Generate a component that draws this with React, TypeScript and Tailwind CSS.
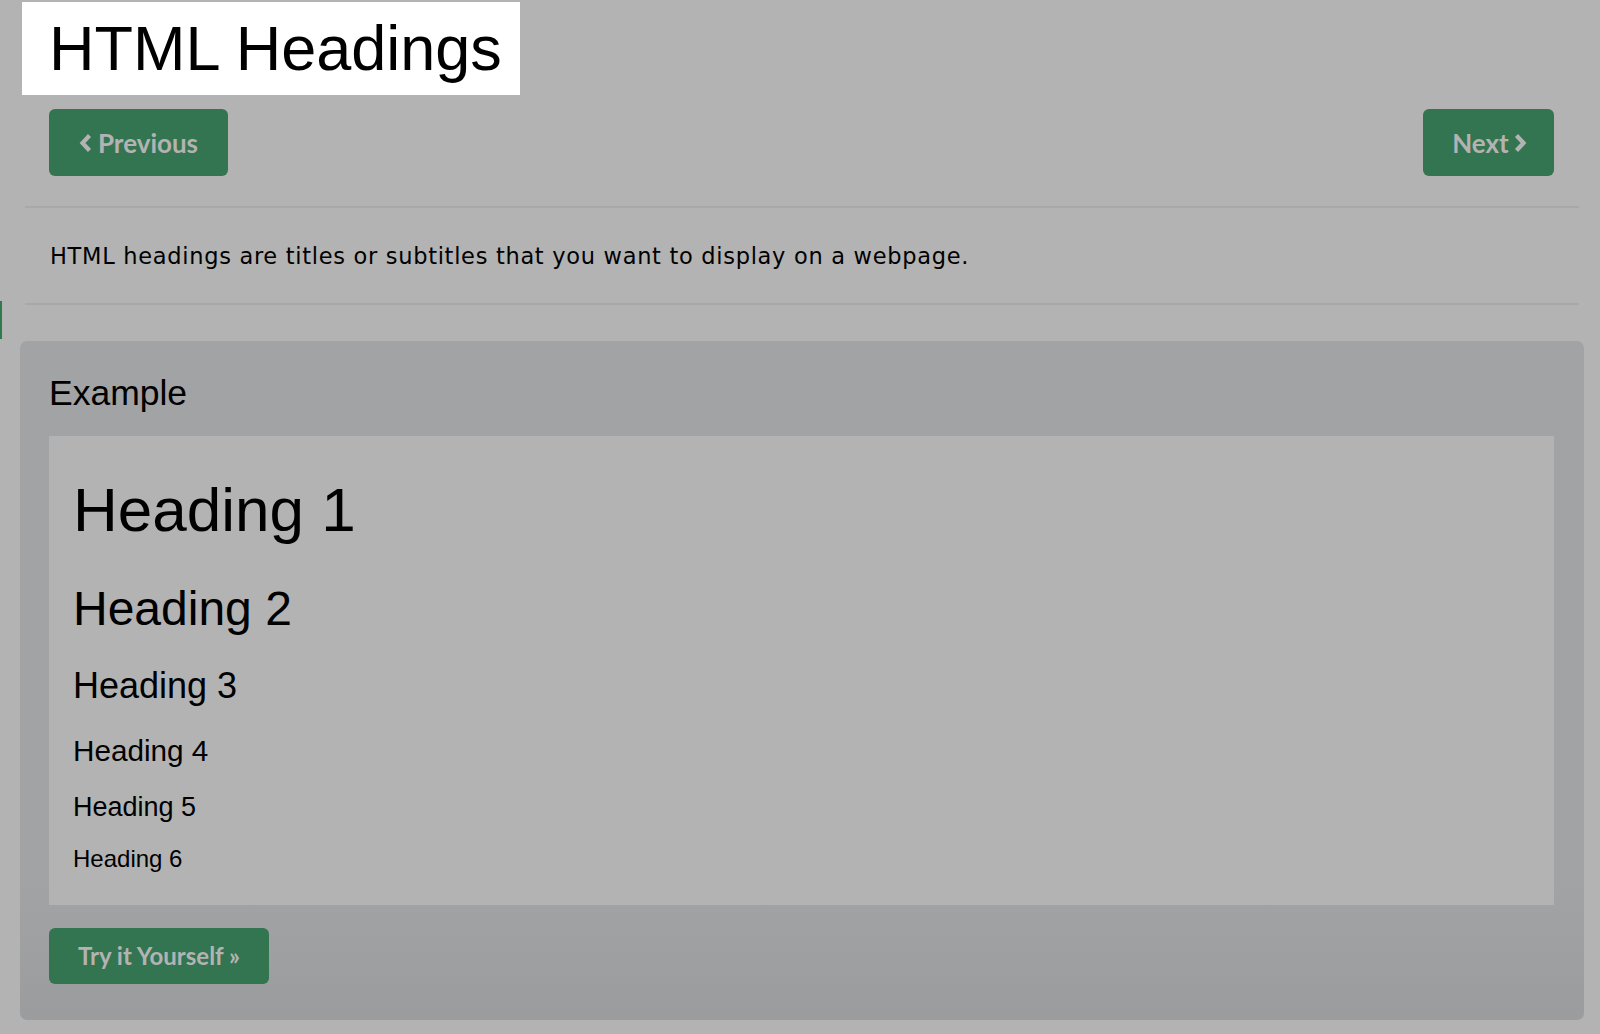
import { ReactNode } from 'react';

const headings = [
  { label: 'Heading 1', cls: 'text-[62px] mt-0' },
  { label: 'Heading 2', cls: 'text-[48px] mt-[44px]' },
  { label: 'Heading 3', cls: 'text-[36px] mt-[35px]' },
  { label: 'Heading 4', cls: 'text-[29.7px] mt-[31.5px]' },
  { label: 'Heading 5', cls: 'text-[27px] mt-[28.5px]' },
  { label: 'Heading 6', cls: 'text-[24px] mt-[26.5px]' },
];

function GreenButton({ children, className }: { children: ReactNode; className?: string }) {
  return (
    <button
      className={`flex items-center justify-center rounded-[6px] bg-[#337551] font-bold text-[#b3b3b3] leading-none ${className ?? ''}`}
      style={{ fontFamily: 'Lato, "Open Sans", sans-serif' }}
    >
      {children}
    </button>
  );
}

function Chevron({ dir }: { dir: 'left' | 'right' }) {
  return (
    <svg width="13" height="20" viewBox="0 0 13 20" className="shrink-0">
      <path
        d={dir === 'left' ? 'M10.5 2.5 L3.5 10 L10.5 17.5' : 'M2.5 2.5 L9.5 10 L2.5 17.5'}
        fill="none"
        stroke="#b3b3b3"
        strokeWidth="4.2"
        strokeLinejoin="miter"
      />
    </svg>
  );
}

export default function App() {
  return (
    <div
      className="relative min-h-screen bg-[#b3b3b3] text-black pl-[20px] pr-[16px] pt-[2px] pb-[20px]"
      style={{ fontFamily: '"Liberation Sans", Arial, sans-serif' }}
    >
      <div className="absolute left-0 top-[301px] w-[2px] h-[38px] bg-[#2f7a4f]" />

      <div className="ml-[2px] w-[498px] h-[93px] bg-white flex items-center pl-[27px]">
        <h1 className="text-[63px] leading-none font-normal">HTML Headings</h1>
      </div>

      <div className="flex justify-between mt-[14px] pl-[29px] pr-[30px]">
        <GreenButton className="w-[179px] h-[67px] gap-[6px] text-[26px]">
          <Chevron dir="left" />
          <span>Previous</span>
        </GreenButton>
        <GreenButton className="w-[131px] h-[67px] gap-[5px] pl-[2px] text-[26px]">
          <span>Next</span>
          <Chevron dir="right" />
        </GreenButton>
      </div>

      <div className="ml-[5px] mr-[5px] mt-[30px] h-[2px] bg-[#a8a8a8]" />

      <p
        className="ml-[30px] mt-[37px] text-[22.5px] tracking-[0.7px] leading-none"
        style={{ fontFamily: '"DejaVu Sans", Verdana, sans-serif' }}
      >
        HTML headings are titles or subtitles that you want to display on a webpage.
      </p>

      <div className="ml-[5px] mr-[5px] mt-[35px] h-[2px] bg-[#a8a8a8]" />

      <div className="mt-[36px] rounded-[7px] bg-gradient-to-b from-[#a2a3a5] from-80% to-[#9b9c9e] pl-[29px] pr-[30px] pt-[35px] pb-[36px]">
        <h3 className="text-[35.5px] leading-none font-normal">Example</h3>

        <div className="mt-[24.5px] bg-[#b3b3b3] pl-[24px] pt-[43.5px] pb-[34px] flex flex-col">
          {headings.map(h => (
            <div key={h.label} className={`leading-none ${h.cls}`}>
              {h.label}
            </div>
          ))}
        </div>

        <GreenButton className="mt-[23px] w-[220px] h-[56px] text-[24px]">
          <span>Try it Yourself »</span>
        </GreenButton>
      </div>
    </div>
  );
}
